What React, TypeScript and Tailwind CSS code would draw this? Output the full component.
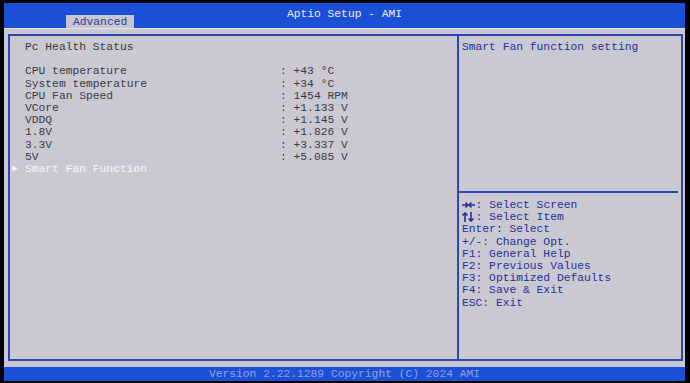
import React from "react";

const rows: [string, string][] = [
  ["CPU temperature", "+43 °C"],
  ["System temperature", "+34 °C"],
  ["CPU Fan Speed", "1454 RPM"],
  ["VCore", "+1.133 V"],
  ["VDDQ", "+1.145 V"],
  ["1.8V", "+1.826 V"],
  ["3.3V", "+3.337 V"],
  ["5V", "+5.085 V"],
];

function LeftRight() {
  return (
    <svg width="13" height="10" viewBox="0 0 13 10" className="mt-[1px]" fill="none" stroke="currentColor" strokeWidth="1.6">
      <path d="M0 5h6M3.5 2.5L6 5L3.5 7.5" />
      <path d="M13 5h-6M9.5 2.5L7 5L9.5 7.5" />
    </svg>
  );
}

function UpDown() {
  return (
    <svg width="13" height="10" viewBox="0 0 13 10" className="mt-[1px]" fill="none" stroke="currentColor" strokeWidth="1.6">
      <path d="M3 10V1M0.5 3.5L3 1L5.5 3.5" />
      <path d="M9 0v9M6.5 6.5L9 9L11.5 6.5" />
    </svg>
  );
}

const help: [React.ReactNode, string][] = [
  [<LeftRight />, ": Select Screen"],
  [<UpDown />, ": Select Item"],
  [null, "Enter: Select"],
  [null, "+/-: Change Opt."],
  [null, "F1: General Help"],
  [null, "F2: Previous Values"],
  [null, "F3: Optimized Defaults"],
  [null, "F4: Save & Exit"],
  [null, "ESC: Exit"],
];

export default function App() {
  return (
    <div
      className="w-[690px] h-[383px] bg-black pt-[3px] pl-[4px] pr-[5px] pb-[2px] flex flex-col text-[11.3px] leading-[12.2px] whitespace-pre"
      style={{ fontFamily: '"Liberation Mono", "DejaVu Sans Mono", monospace' }}
    >
      {/* title bar */}
      <div className="h-[25px] bg-[#1b4fd6] flex flex-col">
        <div className="h-[12px] pt-[5px] text-center text-[#eef0fa] leading-[12px]">Aptio Setup - AMI</div>
        <div className="flex-1 flex items-end">
          <div className="ml-[62px] h-[13px] px-[7px] bg-[#c8c8d2] text-[#2b3a9c] leading-[14px]">Advanced</div>
        </div>
      </div>

      {/* main area */}
      <div className="flex-1 bg-[#cac9d1] pl-[4px] pr-[2px] pt-[5px] pb-[6px] border-t border-[#e2e2ea]">
        <div className="h-full flex border-2 border-[#2d48b4]">
          <div className="w-[447px] pl-[15px] pt-[5px] text-[#3a3a48]">
            <div>Pc Health Status</div>
            <div> </div>
            {rows.map(([k, v]) => (
              <div key={k} className="flex">
                <span className="w-[255px]">{k}</span>
                <span>: {v}</span>
              </div>
            ))}
            <div className="relative text-[#f6f6fa]">
              <span className="absolute left-[-13px] top-[0px] text-[9px]">►</span>
              Smart Fan Function
            </div>
          </div>
          <div className="w-[2px] bg-[#2d48b4]" />
          <div className="flex-1 flex flex-col text-[#26309c]">
            <div className="h-[155px] pl-[3px] pt-[5px]">Smart Fan function setting</div>
            <div className="h-[2px] bg-[#2d48b4] mr-[3px]" />
            <div className="pl-[3px] pt-[6px]">
              {help.map(([a, h]) => (
                <div key={h} className="flex">
                  {a && <span className="w-[13.6px] flex">{a}</span>}
                  <span>{h}</span>
                </div>
              ))}
            </div>
          </div>
        </div>
      </div>

      {/* footer */}
      <div className="h-[14px] bg-[#1b4fd6] text-center text-[#8fa3e0] leading-[14px]">
        Version 2.22.1289 Copyright (C) 2024 AMI
      </div>
    </div>
  );
}
